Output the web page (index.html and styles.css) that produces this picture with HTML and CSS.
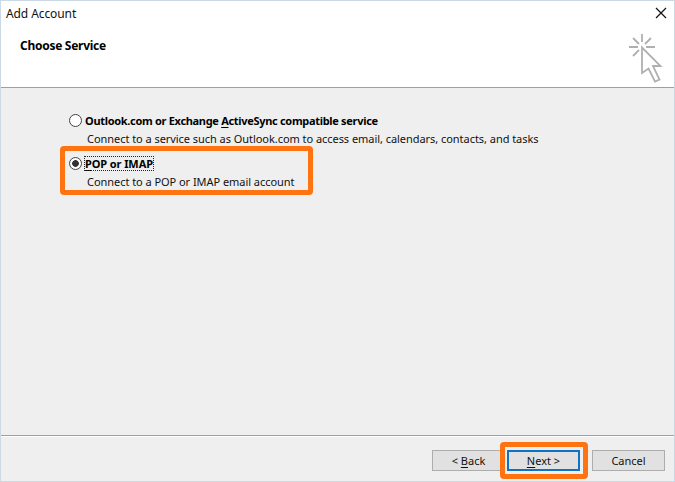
FILE: index.html
```html
<!DOCTYPE html>
<html lang="en">
<head>
<meta charset="utf-8">
<title>Add Account</title>
<link rel="stylesheet" href="styles.css">
</head>
<body>
<div class="dialog">
  <header class="header">
    <div class="titlebar">
      <span class="title">Add Account</span>
      <svg class="close" width="12" height="12" viewBox="0 0 12 12"><path d="M1 1L11 11M11 1L1 11"/></svg>
    </div>
    <div class="heading">
      <h1>Choose Service</h1>
      <svg class="cursor" width="36" height="52" viewBox="0 0 36 52"><path d="M14 2V10M1 15H10M18 15H27M5 6L11 12M23 6L17 12M5 24L11 18"/><path d="M14 15.5V41L20.5 36.5L27 49.5L31.5 47.5L25 34H32.5Z"/></svg>
    </div>
  </header>
  <main class="content">
    <div class="option">
      <label class="choice"><span class="radio"></span><b class="label label-exchange">Outlook.com or Exchange <u>A</u>ctiveSync compatible service</b></label>
      <p class="desc">Connect to a service such as Outlook.com to access email, calendars, contacts, and tasks</p>
    </div>
    <div class="option highlighted">
      <label class="choice"><span class="radio checked"></span><b class="label label-pop"><u>P</u>OP or IMAP</b></label>
      <p class="desc">Connect to a POP or IMAP email account</p>
    </div>
  </main>
  <footer class="footer">
    <button class="btn back"><span>&lt; <u>B</u>ack</span></button>
    <div class="next-frame"><button class="btn primary"><span><u>N</u>ext &gt;</span></button></div>
    <button class="btn cancel"><span>Cancel</span></button>
  </footer>
</div>
</body>
</html>
```
FILE: styles.css
```css
* { box-sizing: border-box; }
body { margin: 0; font: 11px/16px "Noto Sans", sans-serif; color: #111; }
.dialog { width: 675px; height: 482px; display: flex; flex-direction: column; border: 1px solid #cbd9e4; background: #efefef; }
.header { height: 87px; background: #fff; border-bottom: 1px solid #a0a0a0; flex: none; }
.titlebar { display: flex; justify-content: space-between; padding: 5px 7px 0 5px; height: 25px; }
.title { font-size: 12px; letter-spacing: -0.09px; }
.close { margin-top: 1px; fill: none; stroke: #111; stroke-width: 1.2; }
.heading { display: flex; justify-content: space-between; padding: 0 10px 0 19px; }
h1 { margin: 12px 0 0; font-size: 12px; line-height: 16px; letter-spacing: -0.28px; color: #000; }
.cursor { margin-top: 6px; fill: none; stroke: #b0b0b0; stroke-width: 1.8; }
.content { flex: 1; padding: 24px 0 0 59px; }
.option { width: 500px; padding-left: 9px; white-space: nowrap; }
.highlighted { width: 253px; height: 49px; margin-top: -1px; border: 5px solid #ff7310; border-radius: 4px; padding: 4px 0 0 4px; }
.choice { display: flex; align-items: center; height: 17px; }
.radio { flex: none; width: 13px; height: 13px; border: 1px solid #444; border-radius: 50%; background: #fff; margin-right: 2px; }
.checked { background: radial-gradient(circle, #333 0 3px, #fff 3.7px); }
.label { padding: 0 1px; line-height: 16px; color: #000; }
.label-exchange { letter-spacing: -0.31px; }
.label-pop { outline: 1px dotted #222; outline-offset: -1px; line-height: 15px; letter-spacing: -0.1px; }
.desc { margin: 2px 0 0 18px; letter-spacing: -0.048px; }
u { text-underline-offset: 2px; text-decoration-thickness: 1px; }
.footer { flex: none; display: flex; height: 46px; border-top: 1px solid #a0a0a0; box-shadow: inset 0 1px #fff; padding: 6px 9px 0 0; justify-content: flex-end; }
.btn { font: inherit; color: inherit; width: 73px; height: 21px; padding: 0; border: 1px solid #adadad; background: #e1e1e1; }
.back { margin: 8px -5px 0 0; }
.next-frame { position: relative; width: 88px; height: 37px; border: 5px solid #ff7310; border-radius: 4px; padding: 3px 2px; background: #efefef; }
.primary { border: 2px solid #0f72c4; }
.cancel { margin: 8px 0 0 4px; }
```
